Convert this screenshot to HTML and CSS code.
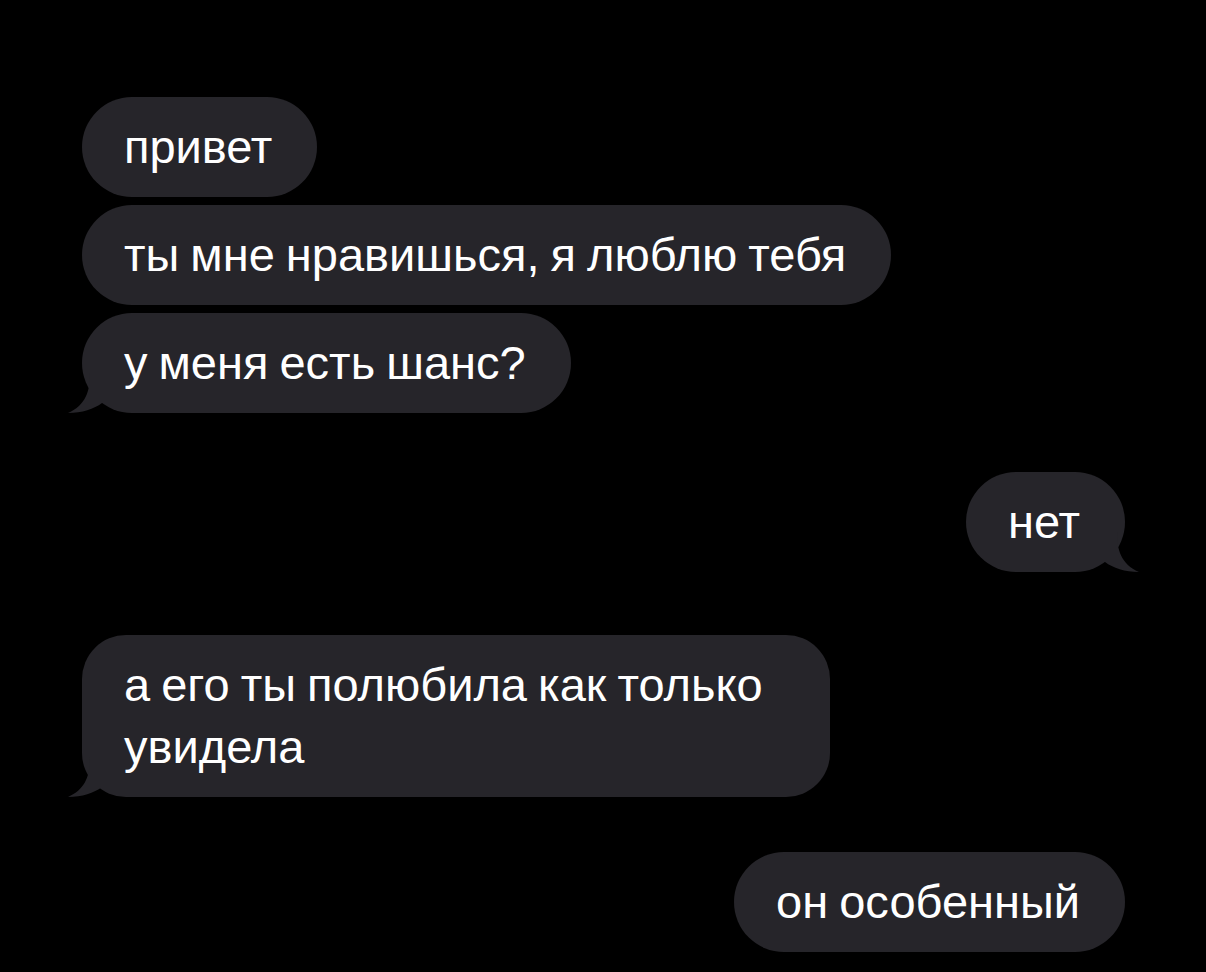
FILE: index.html
```html
<!DOCTYPE html>
<html lang="ru">
<head>
    <meta charset="UTF-8">
    <title>Чат</title>
    <link rel="stylesheet" href="styles.css">
</head>
<body>

    <div class="chat">
        <div class="msg in">привет</div>
        <div class="msg in">ты мне нравишься, я люблю тебя</div>
        <div class="msg in tailed">
            у меня есть шанс?
            <svg class="tail" viewBox="0 0 40 40"><path d="M22 0 C22 18 18 32 0 40 C14 40 26 36 34 30 L40 30 L40 0 Z"/></svg>
        </div>

        <div class="msg out tailed answer">
            нет
            <svg class="tail" viewBox="0 0 40 40"><path d="M18 0 C18 18 22 32 40 40 C26 40 14 36 6 30 L0 30 L0 0 Z"/></svg>
        </div>

        <div class="msg in tailed long">
            а его ты полюбила как только увидела
            <svg class="tail" viewBox="0 0 40 40"><path d="M22 0 C22 18 18 32 0 40 C14 40 26 36 34 30 L40 30 L40 0 Z"/></svg>
        </div>

        <div class="msg out last">он особенный</div>
    </div>

</body>
</html>
```

FILE: styles.css
```css
body {
    margin: 0;
    background-color: #000;
    font-family: 'Liberation Sans', Arial, sans-serif;
    color: #fff;
}

.chat {
    display: flex;
    flex-direction: column;
    align-items: flex-start;
    gap: 8px;
    padding: 97px 81px 0 82px;
}

.msg {
    position: relative;
    background-color: #26252a;
    font-size: 47px;
    line-height: 62px;
    word-spacing: -2px;
    padding: 19px 45px 19px 42px;
    border-radius: 50px;
}

.msg.out {
    align-self: flex-end;
}

.msg.answer {
    margin-top: 51px;
}

.msg.long {
    margin-top: 55px;
    max-width: 661px;
    border-radius: 44px;
}

.msg.last {
    margin-top: 47px;
}

.tail {
    position: absolute;
    bottom: 0;
    width: 40px;
    height: 40px;
    fill: #26252a;
}

.in .tail {
    left: -14px;
}

.out .tail {
    right: -14px;
}
```
